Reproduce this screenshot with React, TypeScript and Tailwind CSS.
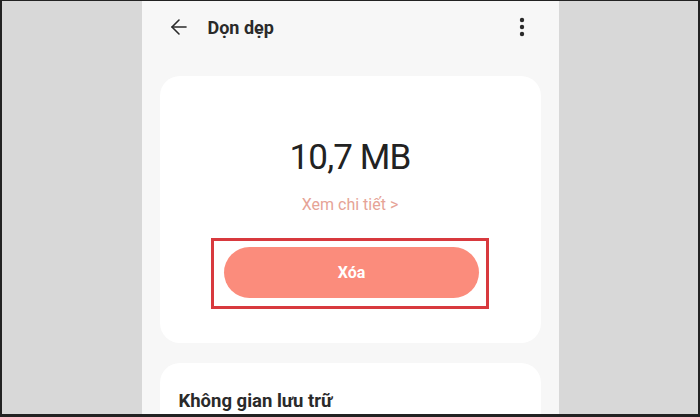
import { ArrowLeft } from "lucide-react";

function MoreIcon() {
  return (
    <svg width="6" height="20" viewBox="0 0 6 20" className="fill-[#2a2a2a]">
      <circle cx="3" cy="3" r="2.2" />
      <circle cx="3" cy="10" r="2.2" />
      <circle cx="3" cy="17" r="2.2" />
    </svg>
  );
}

export default function App() {
  return (
    <div className="w-[700px] h-[417px] bg-[#d8d8d8] border-t border-l-2 border-r-2 border-b-[3px] border-[#222] flex justify-center overflow-hidden font-['Roboto',sans-serif]">
      <div className="w-[417px] h-full bg-[#f7f7f7] flex flex-col">
        {/* top bar */}
        <div className="h-[52px] flex items-center pl-[25px] pr-[34px] shrink-0">
          <ArrowLeft className="w-[24px] h-[24px] text-[#2a2a2a]" strokeWidth={1.6} />
          <div className="ml-[17px] text-[18px] font-bold text-[#2a2a2a]">Dọn dẹp</div>
          <div className="ml-auto">
            <MoreIcon />
          </div>
        </div>

        <div className="px-[18px] pt-[23px] flex flex-col gap-[20px]">
          {/* cleanup card */}
          <div className="bg-white rounded-[20px] h-[267px] flex flex-col items-center pt-[61px]">
            <div className="text-[35px] leading-[42px] text-[#222] tracking-tight">10,7 MB</div>
            <div className="mt-[16px] text-[16px] leading-[20px] text-[#e6a396]">Xem chi tiết &gt;</div>
            <div className="mt-[23px] w-[278px] border-[3px] border-[#d8393e] pl-[10px] pr-[7px] pt-[6px] pb-[8px]">
              <button className="w-full h-[51px] rounded-full bg-[#fb8c7c] text-white text-[16px] font-bold">
                Xóa
              </button>
            </div>
          </div>

          {/* storage card */}
          <div className="bg-white rounded-t-[20px] h-[80px] px-[19px] pt-[25px]">
            <div className="text-[18.5px] font-bold text-[#2a2a2a]">Không gian lưu trữ</div>
          </div>
        </div>
      </div>
    </div>
  );
}
